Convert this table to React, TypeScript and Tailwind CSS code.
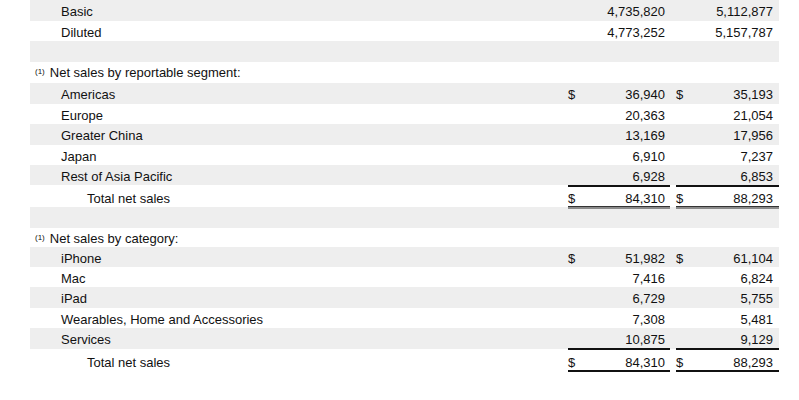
import React from "react";

type Row =
  | { kind: "data"; label: string; a?: string; b?: string; dollar?: boolean; h: number }
  | { kind: "blank"; h: number }
  | { kind: "header"; label: string; h: number }
  | { kind: "total"; a: string; b: string; h: number; variant: 1 | 2 };

const rows: Row[] = [
  { kind: "data", label: "Basic", a: "4,735,820", b: "5,112,877", h: 21 },
  { kind: "data", label: "Diluted", a: "4,773,252", b: "5,157,787", h: 20 },
  { kind: "blank", h: 21 },
  { kind: "header", label: "Net sales by reportable segment:", h: 21 },
  { kind: "data", label: "Americas", a: "36,940", b: "35,193", dollar: true, h: 21 },
  { kind: "data", label: "Europe", a: "20,363", b: "21,054", h: 20 },
  { kind: "data", label: "Greater China", a: "13,169", b: "17,956", h: 21 },
  { kind: "data", label: "Japan", a: "6,910", b: "7,237", h: 20 },
  { kind: "data", label: "Rest of Asia Pacific", a: "6,928", b: "6,853", h: 20 },
  { kind: "total", a: "84,310", b: "88,293", h: 22, variant: 1 },
  { kind: "blank", h: 21 },
  { kind: "header", label: "Net sales by category:", h: 19 },
  { kind: "data", label: "iPhone", a: "51,982", b: "61,104", dollar: true, h: 20 },
  { kind: "data", label: "Mac", a: "7,416", b: "6,824", h: 20 },
  { kind: "data", label: "iPad", a: "6,729", b: "5,755", h: 21 },
  { kind: "data", label: "Wearables, Home and Accessories", a: "7,308", b: "5,481", h: 20 },
  { kind: "data", label: "Services", a: "10,875", b: "9,129", h: 21 },
  { kind: "total", a: "84,310", b: "88,293", h: 22, variant: 2 },
];

function NumCell({
  value,
  dollar,
  pr,
}: {
  value?: string;
  dollar?: boolean;
  pr: string;
}) {
  return (
    <div className={`flex justify-between leading-[23px] ${pr}`}>
      <span>{dollar ? "$" : ""}</span>
      <span>{value ?? ""}</span>
    </div>
  );
}

export default function App() {
  return (
    <div
      className="w-[799px] h-[400px] bg-white text-[13px] text-[#111111] overflow-hidden"
      style={{ fontFamily: '"Liberation Sans", Arial, sans-serif' }}
    >
      <div className="ml-[30px] w-[749px] flex flex-col">
        {rows.map((r, i) => {
          const grey = i % 2 === 0;
          const bg = grey ? "bg-[#eeeeee]" : "bg-white";
          const style = { height: `${r.h}px` };
          if (r.kind === "blank") {
            return <div key={i} className={bg} style={style} />;
          }
          if (r.kind === "header") {
            return (
              <div key={i} className={`${bg} flex items-start pl-[5px]`} style={style}>
                <span className="text-[8px] leading-none mt-[6px] mr-[5px]">(1)</span>
                <span className="leading-none mt-[4px]">{r.label}</span>
              </div>
            );
          }
          if (r.kind === "total") {
            const v1 = r.variant === 1;
            return (
              <div key={i} className={`${bg} flex items-start`} style={style}>
                <div className={`w-[538px] pl-[57px] leading-[23px] ${v1 ? "pt-[2px]" : "pt-[1.5px]"}`}>
                  Total net sales
                </div>
                {[
                  { v: r.a, w: "w-[102px]", pr: "pr-[5px]" },
                  { v: r.b, w: "w-[103px]", pr: "pr-[6px]" },
                ].map((c, j) => (
                  <div
                    key={j}
                    className={`${c.w} ${j === 1 ? "ml-[6px]" : ""} relative z-10 flex flex-col ${
                      v1 ? "h-[24px] border-t-2 border-[#111]" : "h-[23px] pt-[1.5px]"
                    }`}
                  >
                    <div className="flex-1 min-h-0">
                      <div className={`flex justify-between leading-[23px] ${c.pr}`}>
                        <span>$</span>
                        <span>{c.v}</span>
                      </div>
                    </div>
                    {v1 ? (
                      <div className="h-[3px] shrink-0 border-t border-[#333] bg-[#8a8a8a]" />
                    ) : (
                      <div className="h-[2px] shrink-0 bg-[#111]" />
                    )}
                  </div>
                ))}
              </div>
            );
          }
          const underlined = r.label === "Services";
          return (
            <div key={i} className={`${bg} flex items-start`} style={style}>
              <div className="w-[538px] pl-[31px] leading-[23px]">{r.label}</div>
              <div
                className={`w-[102px] ${
                  underlined ? "relative z-10 h-[22px] border-b-2 border-[#111]" : "h-full"
                }`}
              >
                <NumCell value={r.a} dollar={r.dollar} pr="pr-[5px]" />
              </div>
              <div
                className={`w-[103px] ml-[6px] ${
                  underlined ? "relative z-10 h-[22px] border-b-2 border-[#111]" : "h-full"
                }`}
              >
                <NumCell value={r.b} dollar={r.dollar} pr="pr-[6px]" />
              </div>
            </div>
          );
        })}
      </div>
    </div>
  );
}
